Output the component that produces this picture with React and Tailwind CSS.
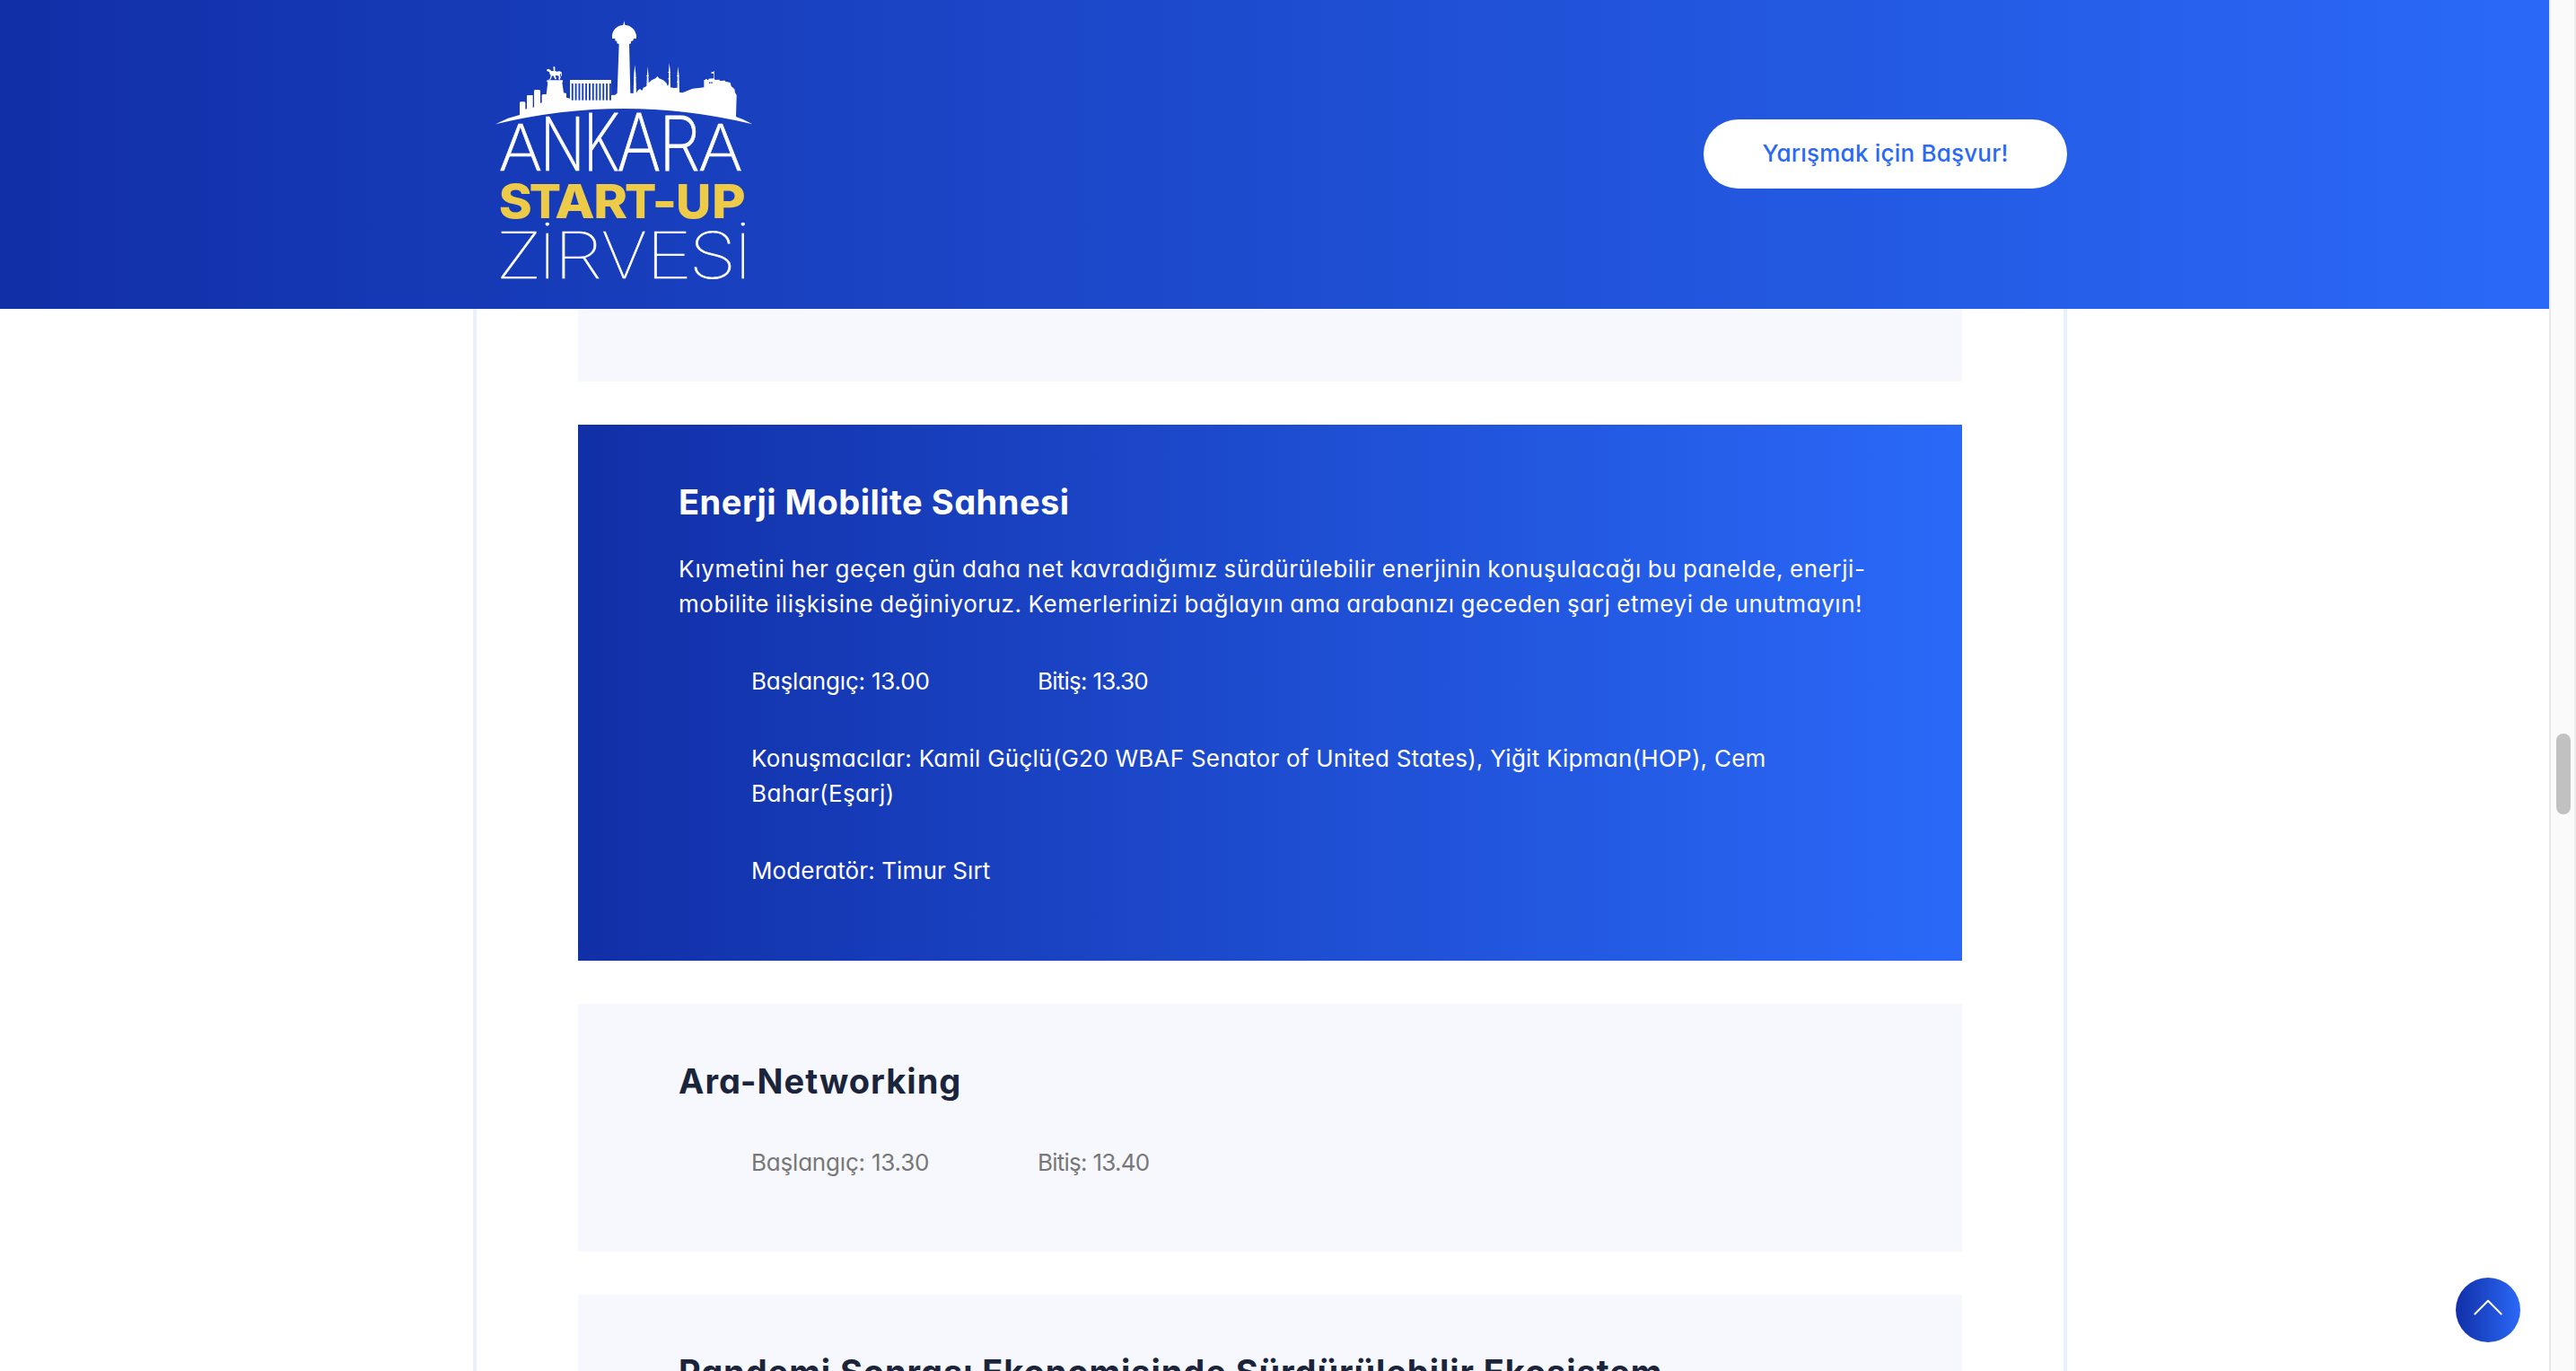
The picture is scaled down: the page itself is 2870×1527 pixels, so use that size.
import React from 'react';

const GRADIENT = 'bg-[linear-gradient(90deg,#112fa7_0%,#2a69f8_100%)]';

/* Ink extents [left, right] of each capital at font-size 100. */
const INK = {
  200: { A: [2.5, 63], N: [10, 67], K: [10, 60], R: [10, 59.5] },
  800: { S: [3, 63], T: [3, 65], A: [1.5, 75.5], R: [5, 65], '-': [6, 41], U: [5, 68], P: [5, 62] },
  100: { Z: [7, 54.5], R: [11, 57], V: [3, 61], E: [11, 52.5], S: [6.5, 55] },
};

/* [letter, left, right, top] */
const ANKARA = [
  ['A', 82, 217, 386],
  ['N', 235, 347, 360],
  ['K', 379, 477, 350],
  ['A', 477, 613, 350],
  ['R', 634, 744, 357],
  ['A', 749, 887, 386],
];
const STARTUP = [
  ['S', 82, 183, 583],
  ['T', 184, 281, 583],
  ['A', 267, 395, 583],
  ['R', 402, 505, 583],
  ['T', 503, 600, 583],
  ['-', 600, 662, 583],
  ['U', 677, 779, 583],
  ['P', 798, 897, 583],
];
const ZIRVESI = [
  ['Z', 85, 205, 746],
  ['İ', 235, 243, 752],
  ['R', 290, 411, 746],
  ['V', 427, 565, 746],
  ['E', 597, 708, 746],
  ['S', 729, 856, 746],
  ['İ', 889, 897, 752],
];

function Letters({ letters, weight, baseline, className }) {
  return (
    <g className={className} fontFamily="Inter, sans-serif" fontSize="100" fontWeight={weight}>
      {letters.map(([c, x0, x1, top], i) => {
        const sy = (baseline - top) / 72.7;
        if (c === 'İ') {
          return (
            <text key={i} textAnchor="middle" transform={`translate(${(x0 + x1) / 2} ${baseline}) scale(${sy * 1.15} ${sy})`}>
              {c}
            </text>
          );
        }
        const [l, r] = INK[weight][c];
        const sx = (x1 - x0) / (r - l);
        return (
          <text key={i} transform={`translate(${x0 - l * sx} ${baseline}) scale(${sx} ${sy})`}>
            {c}
          </text>
        );
      })}
    </g>
  );
}

function Logo() {
  return (
    <svg viewBox="0 0 990 930" className="h-[310px] w-[330px]" aria-label="Ankara Start-Up Zirvesi">
      <g fill="#fff">
        <path d="M66 385 L108 365 L147 354 V313 L150 310 H163 L166 313 V335 L171 333 V290 L173 288 H191 V330 L195 328 V273 L198 270 H213 L216 273 V315 L221 313 V288 L224 285 H236 L241 245 L238 243 V238 H291 V244 L289 246 L294 280 L303 282 V296 L315 299 V237 H453 V288 L466 287 L473 281 L479 117 L472 115 V108 L466 106 V99 H456 V86 C460 66 475 55 493 53 L496 40 L499 53 C518 55 533 67 537 88 V99 H528 L526 106 L519 108 V115 L513 117 L517 281 L527 282 L529 215 L532 187 L535 215 L537 281 L541 273 L549 267 L556 273 L560 263 L571 258 L573 215 L575 193 L577 215 L578 247 L588 238 L601 232 L607 225 L613 232 L627 238 L637 247 L642 258 L645 250 L645 205 L647 181 L650 205 L651 262 L662 264 L674 263 L674 215 L676 192 L679 215 L681 278 L691 280 L706 274 L725 266 L745 264 L763 262 V237 H768 V234 H773 V237 H778 V233 L795 232 V216 H788 V210 H795 V207 H797 V232 L800 237 L815 236 V240 L834 239 V242 L851 246 L854 258 L865 268 L867 280 L872 288 L870 360 L895 370 L925 385 Q497 281 66 385 Z" />
        <path d="M242 238 L248 233 L251 222 L247 216 L246 210 L239 208 L237 203 L243 200 L249 203 L254 208 L260 207 L260 200 L259 194 L262 191 L265 195 L265 206 L270 209 L280 208 L287 211 L288 223 L285 224 L284 215 L281 219 L284 228 L281 237 L277 235 L278 225 L272 222 L266 223 L270 234 L265 235 L259 223 L254 225 L252 235 Z" />
        <path d="M528 228h8v3h-8zM528 250h8v3h-8zM571 222h7v3h-7zM643 210h8v3h-8zM643 232h8v3h-8zM672 222h8v3h-8zM672 242h8v3h-8z" />
      </g>
      <g className="fill-[#183fbb]">
        {Array.from({ length: 12 }, (_, i) => (
          <rect key={i} x={320.5 + i * 11.5} y="249" width="5.6" height="56" />
        ))}
        <rect x="780" y="244" width="4" height="5" />
        <rect x="787" y="244" width="4" height="5" />
      </g>
      <Letters letters={ANKARA} weight={200} baseline={541} className="fill-white stroke-white [stroke-width:0.9px]" />
      <Letters letters={STARTUP} weight={800} baseline={698} className="fill-[#edcb49]" />
      <Letters letters={ZIRVESI} weight={100} baseline={901} className="fill-white stroke-white [stroke-width:0.9px]" />
    </svg>
  );
}

function Session({ active, title, children, className }) {
  return (
    <article
      className={`${className} pl-[112px] pr-20 pt-[62px] ${
        active ? `${GRADIENT} font-[440] text-white` : 'bg-[#f6f8fd] text-[#777]'
      }`}
    >
      {title && (
        <h3 className={`text-[38px] font-bold leading-12 whitespace-nowrap ${active ? 'text-white' : 'text-[#1a253c]'}`}>
          {title}
        </h3>
      )}
      {children}
    </article>
  );
}

function Times({ start, end }) {
  return (
    <div className="flex">
      <span className="w-[319px] tracking-[-0.2px]">Başlangıç: {start}</span>
      <span className="tracking-[-0.75px]">Bitiş: {end}</span>
    </div>
  );
}

export default function App() {
  return (
    <div className="flex h-[1527px] w-[2870px] overflow-hidden bg-white font-['Inter',sans-serif] [font-feature-settings:'cv11']">
      <div className="relative flex w-[2840px] flex-col">
        <header className={`flex h-[344px] shrink-0 items-start justify-between pl-[530px] pr-[537px] pt-2.5 ${GRADIENT}`}>
          <Logo />
          <button className="mt-[123px] flex h-[77px] w-[405px] items-center justify-center rounded-full bg-white pb-0.5 text-[26px] font-[550] tracking-[0.2px] text-[#2a69f6]">
            Yarışmak için Başvur!
          </button>
        </header>

        <main className="ml-[527px] flex min-h-0 w-[1776px] flex-1 flex-col gap-12 overflow-hidden border-x-4 border-[#e8f0fd] px-[113px] text-[26px] leading-[39px]">
          <Session className="h-[81px] shrink-0" />

          <Session active title={<span className="tracking-[0.5px]">Enerji Mobilite Sahnesi</span>} className="shrink-0 pb-[81px]">
            <p className="mt-[31px] whitespace-nowrap tracking-[0.59px] [word-spacing:-1px]">
              Kıymetini her geçen gün daha net kavradığımız sürdürülebilir enerjinin konuşulacağı bu panelde, enerji-
              <br />
              <span className="tracking-[0.56px]">
                mobilite ilişkisine değiniyoruz. Kemerlerinizi bağlayın ama arabanızı geceden şarj etmeyi de unutmayın!
              </span>
            </p>
            <div className="mt-[47px] flex flex-col gap-[47px] pl-[81px]">
              <Times start="13.00" end="13.30" />
              <p className="whitespace-nowrap tracking-[0.25px]">
                Konuşmacılar: Kamil Güçlü(G20 WBAF Senator of United States), Yiğit Kipman(HOP), Cem
                <br />
                <span className="tracking-[0.4px]">Bahar(Eşarj)</span>
              </p>
              <p className="tracking-[0.12px]">Moderatör: Timur Sırt</p>
            </div>
          </Session>

          <Session title={<span className="tracking-[1.05px]">Ara-Networking</span>} className="shrink-0 pb-20">
            <div className="mt-[47px] pl-[81px]">
              <Times start="13.30" end="13.40" />
            </div>
          </Session>

          <Session
            title={<span className="tracking-[0.93px]">Pandemi Sonrası Ekonomisinde Sürdürülebilir Ekosistem</span>}
            className="h-[276px] shrink-0"
          />
        </main>

        <button
          aria-label="Yukarı çık"
          className={`absolute bottom-8 right-8 flex size-[72px] items-center justify-center rounded-full ${GRADIENT}`}
        >
          <svg viewBox="0 0 72 72" className="size-full fill-none stroke-white stroke-2" strokeLinecap="round" strokeLinejoin="round">
            <path d="M21.3 40.5 L36 25.8 L50.7 40.5" />
          </svg>
        </button>
      </div>

      <div className="flex w-[30px] justify-center border-l-2 border-r-2 border-l-[#e8e8e8] border-r-[#ededed] bg-[#fafafa] pl-[2px] pt-[817px]">
        <div className="h-[90px] w-4 rounded-full bg-[#c1c1c1]" />
      </div>
    </div>
  );
}
